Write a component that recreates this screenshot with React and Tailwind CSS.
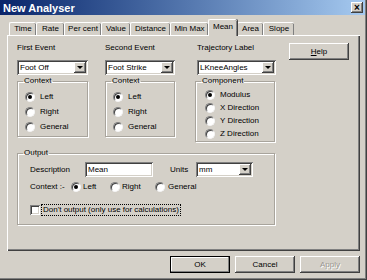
import React from 'react';

const outset = 'shadow-[inset_-1px_-1px_0_#404040,inset_1px_1px_0_#fff,inset_-2px_-2px_0_#808080]';
const sunken = 'shadow-[inset_1px_1px_0_#808080,inset_-1px_-1px_0_#fff,inset_2px_2px_0_#404040,inset_-2px_-2px_0_#d4d0c8]';

const Radio = ({ checked }) => (
  <span className="w-[10px] h-[10px] shrink-0 rounded-full bg-white border border-t-[#808080] border-l-[#808080] border-r-[#f4f4f4] border-b-[#f4f4f4] shadow-[inset_1px_1px_0_#404040] flex items-center justify-center">
    {checked && <span className="w-[4px] h-[4px] rounded-full bg-black" />}
  </span>
);

const Combo = ({ value, className }) => (
  <div className={`flex h-[15px] bg-white p-[2px] ${sunken} ${className}`}>
    <span className="flex-1 pl-[1px] leading-[11px] text-black whitespace-nowrap overflow-hidden">{value}</span>
    <span className={`w-[12px] h-[11px] bg-[#d4d0c8] ${outset} flex items-center justify-center`}>
      <span className="w-0 h-0 border-l-[3px] border-r-[3px] border-t-[3px] border-l-transparent border-r-transparent border-t-black" />
    </span>
  </div>
);

// legend sits at the fieldset edge; padding lives on the inner div
const Group = ({ title, className, inner, children }) => (
  <fieldset className={`border border-[#a8a49c] shadow-[1px_1px_0_#fff,inset_1px_1px_0_#fff] ${className}`}>
    <legend className="ml-[5px] px-[1px] leading-[10px] text-black">{title}</legend>
    <div className={inner}>{children}</div>
  </fieldset>
);

const RadioRow = ({ label, checked, className }) => (
  <div className={`flex items-center gap-[5px] ${className}`}>
    <Radio checked={checked} />
    <span className="leading-[10px]">{label}</span>
  </div>
);

const tabs = [
  { label: 'Time', w: 'w-[27px]' },
  { label: 'Rate', w: 'w-[28px]' },
  { label: 'Per cent', w: 'w-[37px]' },
  { label: 'Value', w: 'w-[29px]' },
  { label: 'Distance', w: 'w-[40px]' },
  { label: 'Min Max', w: 'w-[38px]' },
  { label: 'Mean', w: 'w-[29px]', active: true },
  { label: 'Area', w: 'w-[26px]' },
  { label: 'Slope', w: 'w-[31px]' },
];

export default function App() {
  return (
    <div className="w-[367px] h-[280px] overflow-hidden bg-[#d4d0c8] flex flex-col font-['Liberation_Sans',Arial,sans-serif] text-[8px] text-black shadow-[inset_-1px_-1px_0_#404040,inset_-2px_-2px_0_#808080]">
      {/* Title bar */}
      <div className="h-[15px] mr-[2px] flex items-center justify-between bg-gradient-to-r from-[#0a246a] to-[#a6caf0] pl-[3px] pr-[2px]">
        <span className="text-white font-bold text-[11px] leading-[12px]">New Analyser</span>
        <span className={`w-[12px] h-[11px] bg-[#d4d0c8] ${outset} flex items-center justify-center text-[10px] font-bold leading-none`}>×</span>
      </div>

      <div className="flex flex-col px-[7px] pt-[4px]">
        {/* Tabs */}
        <div className="flex items-end h-[16px] pl-[2px]">
          {tabs.map((t) =>
            t.active ? (
              <div
                key={t.label}
                className={`${t.w} h-[17px] -mb-px relative z-10 bg-[#d4d0c8] border-t border-l border-white rounded-t-[2px] shadow-[inset_-1px_0_0_#808080,1px_0_0_#404040] flex items-center justify-center pb-[2px]`}
              >
                {t.label}
              </div>
            ) : (
              <div
                key={t.label}
                className={`${t.w} h-[13px] border-t border-l border-white rounded-t-[2px] shadow-[inset_-1px_0_0_#808080] flex items-center justify-center`}
              >
                {t.label}
              </div>
            )
          )}
        </div>

        {/* Panel */}
        <div className="h-[216px] border-t border-l border-white shadow-[inset_-1px_-1px_0_#404040,inset_-2px_-2px_0_#808080] pl-[9px] pt-[7px]">
          <div className="flex items-start">
            <div className="w-[71px] flex flex-col">
              <span className="leading-[10px]">First Event</span>
              <Combo value="Foot Off" className="mt-[7px] w-[71px]" />
              <Group title="Context" className="mt-[1px] w-[71px]" inner="pl-[7px] pt-[3px] pb-[2px]">
                <RadioRow label="Left" checked className="h-[15px]" />
                <RadioRow label="Right" className="h-[15px]" />
                <RadioRow label="General" className="h-[15px]" />
              </Group>
            </div>

            <div className="w-[70px] ml-[17px] flex flex-col">
              <span className="leading-[10px]">Second Event</span>
              <Combo value="Foot Strike" className="mt-[7px] w-[70px]" />
              <Group title="Context" className="mt-[1px] w-[70px]" inner="pl-[7px] pt-[3px] pb-[2px]">
                <RadioRow label="Left" checked className="h-[15px]" />
                <RadioRow label="Right" className="h-[15px]" />
                <RadioRow label="General" className="h-[15px]" />
              </Group>
            </div>

            <div className="w-[81px] ml-[20px] flex flex-col">
              <span className="leading-[10px] ml-[2px]">Trajectory Label</span>
              <Combo value="LKneeAngles" className="mt-[7px] ml-[2px] w-[79px]" />
              <Group title="Component" className="mt-[1px] w-[80px]" inner="pl-[9px] pt-[2px] pb-[1px]">
                <RadioRow label="Modulus" checked className="h-[13px] gap-[3px]" />
                <RadioRow label="X Direction" className="h-[13px] gap-[3px]" />
                <RadioRow label="Y Direction" className="h-[13px] gap-[3px]" />
                <RadioRow label="Z Direction" className="h-[13px] gap-[3px]" />
              </Group>
            </div>

            <button className={`ml-[13px] w-[60px] h-[17px] bg-[#d4d0c8] ${outset} text-[8px] leading-none`}>
              <span className="underline">H</span>elp
            </button>
          </div>

          {/* Output */}
          <Group title="Output" className="mt-[6px] w-[258px]" inner="pl-[12px] pt-[4px] pb-[8px]">
            <div className="flex items-center h-[15px]">
              <span className="w-[55px] leading-[10px]">Description</span>
              <div className={`w-[68px] h-[15px] bg-white px-[3px] flex items-center ${sunken}`}>Mean</div>
              <span className="ml-[17px] w-[26px] leading-[10px]">Units</span>
              <Combo value="mm" className="w-[57px]" />
            </div>
            <div className="flex items-center h-[12px] mt-[4px]">
              <span className="w-[41px] leading-[10px]">Context :-</span>
              <div className="w-[39px] flex items-center gap-[2px]">
                <Radio checked />
                <span>Left</span>
              </div>
              <div className="w-[45px] flex items-center gap-[2px]">
                <Radio />
                <span>Right</span>
              </div>
              <div className="flex items-center gap-[3px]">
                <Radio />
                <span>General</span>
              </div>
            </div>
            <div className="flex items-center h-[12px] mt-[11px]">
              <span className={`w-[10px] h-[10px] bg-white ${sunken}`} />
              <span className="ml-[1px] px-[1px] border border-dotted border-black leading-[10px]">
                Don't output (only use for calculations)
              </span>
            </div>
          </Group>
        </div>

        {/* Buttons */}
        <div className="flex justify-end gap-[5px] mt-[5px]">
          <button className="w-[60px] h-[17px] border border-black bg-[#d4d0c8] shadow-[inset_-1px_-1px_0_#808080,inset_1px_1px_0_#fff] text-[8px] leading-none">
            OK
          </button>
          <button className={`w-[60px] h-[17px] bg-[#d4d0c8] ${outset} text-[8px] leading-none`}>Cancel</button>
          <button className={`w-[60px] h-[17px] bg-[#d4d0c8] ${outset} text-[8px] leading-none text-[#9a9790] [text-shadow:1px_1px_0_#fff]`}>
            Apply
          </button>
        </div>
      </div>
    </div>
  );
}
